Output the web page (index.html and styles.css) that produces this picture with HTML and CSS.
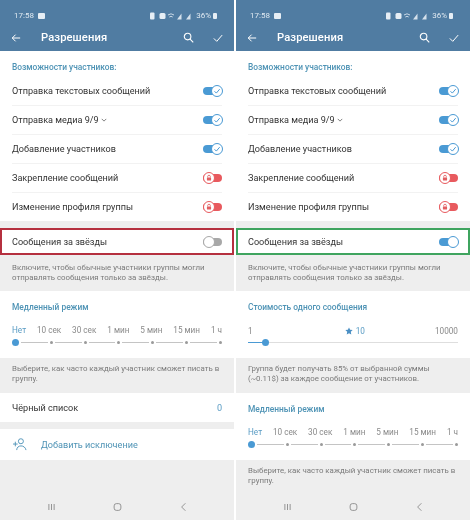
FILE: index.html
```html
<!DOCTYPE html>
<html lang="ru">
<head>
<meta charset="utf-8">
<title>Разрешения</title>
<link rel="stylesheet" href="styles.css">
</head>
<body>
<svg class="defs" width="0" height="0" aria-hidden="true">
  <symbol id="i-check" viewBox="0 0 12 12"><path d="M3 6.300l2.200 2.200L9.200 3.800" fill="none" stroke="#4a9ad4" stroke-width="1.200"/></symbol>
  <symbol id="i-lock" viewBox="0 0 12 12"><path d="M4.400 5.400V4.300a1.600 1.600 0 0 1 3.200 0v1.100" fill="none" stroke="#e25f62" stroke-width="1"/><rect x="3.500" y="5.300" width="5" height="3.700" rx=".7" fill="#e25f62"/></symbol>
  <symbol id="i-status" viewBox="0 0 46 8">
    <rect x="0" y="0.500" width="4.500" height="7" rx="1" fill="#e6eef5"/>
    <rect x="9.500" y="1" width="6" height="6" rx="1.500" fill="#e6eef5"/>
    <path d="M18 3q3-2.400 6 0M19.300 5q1.700-1.300 3.400 0" fill="none" stroke="#d5e1ec" stroke-width=".9"/>
    <path d="M27 7.500l4.500-6v6zM36 7.500l4.500-6v6z" fill="#d5e1ec"/>
  </symbol>
</svg>
<main class="screens">

  <section class="phone">
    <header class="top">
      <div class="status">
        <span class="clock">17:58</span>
        <span class="pic"></span>
        <span class="status-right"><svg class="status-icons"><use href="#i-status"/></svg><span class="percent">36%</span><span class="batt"></span></span>
      </div>
      <div class="bar">
        <svg class="icon back" viewBox="0 0 12 12"><path d="M11 6H1.500M5.500 2L1.500 6l4 4" fill="none" stroke="#fff" stroke-width="1.200"/></svg>
        <span class="title">Разрешения</span>
        <svg class="icon search" viewBox="0 0 12 12"><circle cx="5" cy="5" r="3.600" fill="none" stroke="#fff" stroke-width="1.200"/><path d="M7.700 7.700L11.200 11.200" stroke="#fff" stroke-width="1.200"/></svg>
        <svg class="icon done" viewBox="0 0 12 12"><path d="M1 6.500l3.500 3.500L11 2.500" fill="none" stroke="#fff" stroke-width="1.200"/></svg>
      </div>
    </header>
    <div class="card perms">
      <h2 class="heading">Возможности участников:</h2>
      <div class="row line"><span>Отправка текстовых сообщений</span><span class="toggle on"><svg class="knob"><use href="#i-check"/></svg></span></div>
      <div class="row line"><span>Отправка медиа 9/9<svg class="caret" viewBox="0 0 8 5"><path d="M1 1l3 3 3-3" fill="none" stroke="#444" stroke-width=".9"/></svg></span><span class="toggle on"><svg class="knob"><use href="#i-check"/></svg></span></div>
      <div class="row line"><span>Добавление участников</span><span class="toggle on"><svg class="knob"><use href="#i-check"/></svg></span></div>
      <div class="row line"><span>Закрепление сообщений</span><span class="toggle locked"><svg class="knob"><use href="#i-lock"/></svg></span></div>
      <div class="row last"><span>Изменение профиля группы</span><span class="toggle locked"><svg class="knob"><use href="#i-lock"/></svg></span></div>
    </div>
    <div class="stars red"><span>Сообщения за звёзды</span><span class="toggle off"><span class="knob"></span></span></div>
    <p class="hint hint-stars">Включите, чтобы обычные участники группы могли отправлять сообщения только за звёзды.</p>
    <div class="card slow">
      <h2 class="heading">Медленный режим</h2>
      <div class="labels"><span class="active">Нет</span><span>10 сек</span><span>30 сек</span><span>1 мин</span><span>5 мин</span><span>15 мин</span><span>1 ч</span></div>
      <div class="steps"><i class="thumb"></i><b></b><i></i><b></b><i></i><b></b><i></i><b></b><i></i><b></b><i></i><b></b><i></i></div>
    </div>
    <p class="hint">Выберите, как часто каждый участник сможет писать в группу.</p>
    <div class="card row block"><span>Чёрный список</span><span class="count">0</span></div>
    <div class="card row add">
      <svg class="add-icon" viewBox="0 0 16 14"><path d="M1 6.500h5M3.500 4v5" stroke="#4f93b8" fill="none" stroke-width="1"/><circle cx="9.500" cy="3.500" r="2.700" fill="none" stroke="#4f93b8"/><path d="M5 13c0-6 9-6 10 0" fill="none" stroke="#4f93b8"/></svg>
      <span class="link">Добавить исключение</span>
    </div>
    <nav class="nav">
      <svg class="nav-icon" viewBox="0 0 12 12"><path d="M2.500 2v8M6 2v8M9.500 2v8" stroke="#777" fill="none"/></svg>
      <svg class="nav-icon" viewBox="0 0 12 12"><rect x="1.500" y="1.500" width="9" height="9" rx="3" fill="none" stroke="#777"/></svg>
      <svg class="nav-icon" viewBox="0 0 12 12"><path d="M8.500 1L3.500 6l5 5" fill="none" stroke="#777"/></svg>
    </nav>
  </section>

  <section class="phone">
    <header class="top">
      <div class="status">
        <span class="clock">17:58</span>
        <span class="pic"></span>
        <span class="status-right"><svg class="status-icons"><use href="#i-status"/></svg><span class="percent">36%</span><span class="batt"></span></span>
      </div>
      <div class="bar">
        <svg class="icon back" viewBox="0 0 12 12"><path d="M11 6H1.500M5.500 2L1.500 6l4 4" fill="none" stroke="#fff" stroke-width="1.200"/></svg>
        <span class="title">Разрешения</span>
        <svg class="icon search" viewBox="0 0 12 12"><circle cx="5" cy="5" r="3.600" fill="none" stroke="#fff" stroke-width="1.200"/><path d="M7.700 7.700L11.200 11.200" stroke="#fff" stroke-width="1.200"/></svg>
        <svg class="icon done" viewBox="0 0 12 12"><path d="M1 6.500l3.500 3.500L11 2.500" fill="none" stroke="#fff" stroke-width="1.200"/></svg>
      </div>
    </header>
    <div class="card perms">
      <h2 class="heading">Возможности участников:</h2>
      <div class="row line"><span>Отправка текстовых сообщений</span><span class="toggle on"><svg class="knob"><use href="#i-check"/></svg></span></div>
      <div class="row line"><span>Отправка медиа 9/9<svg class="caret" viewBox="0 0 8 5"><path d="M1 1l3 3 3-3" fill="none" stroke="#444" stroke-width=".9"/></svg></span><span class="toggle on"><svg class="knob"><use href="#i-check"/></svg></span></div>
      <div class="row line"><span>Добавление участников</span><span class="toggle on"><svg class="knob"><use href="#i-check"/></svg></span></div>
      <div class="row line"><span>Закрепление сообщений</span><span class="toggle locked"><svg class="knob"><use href="#i-lock"/></svg></span></div>
      <div class="row last"><span>Изменение профиля группы</span><span class="toggle locked"><svg class="knob"><use href="#i-lock"/></svg></span></div>
    </div>
    <div class="stars green"><span>Сообщения за звёзды</span><span class="toggle on"><span class="knob"></span></span></div>
    <p class="hint hint-stars">Включите, чтобы обычные участники группы могли отправлять сообщения только за звёзды.</p>
    <div class="card price">
      <h2 class="heading">Стоимость одного сообщения</h2>
      <div class="price-labels"><span>1</span><span class="amount"><svg class="star" viewBox="0 0 12 12"><path d="M6 .6l1.700 3.500 3.800.5-2.800 2.700.7 3.800L6 9.300l-3.400 1.800.7-3.800L.5 4.600l3.800-.5z" fill="#4a8fc4"/></svg>10</span><span>10000</span></div>
      <div class="range"><i class="thumb"></i></div>
    </div>
    <p class="hint">Группа будет получать 85% от выбранной суммы (~0.11$) за каждое сообщение от участников.</p>
    <div class="card slow">
      <h2 class="heading">Медленный режим</h2>
      <div class="labels"><span class="active">Нет</span><span>10 сек</span><span>30 сек</span><span>1 мин</span><span>5 мин</span><span>15 мин</span><span>1 ч</span></div>
      <div class="steps"><i class="thumb"></i><b></b><i></i><b></b><i></i><b></b><i></i><b></b><i></i><b></b><i></i><b></b><i></i></div>
    </div>
    <p class="hint">Выберите, как часто каждый участник сможет писать в группу.</p>
    <nav class="nav">
      <svg class="nav-icon" viewBox="0 0 12 12"><path d="M2.500 2v8M6 2v8M9.500 2v8" stroke="#777" fill="none"/></svg>
      <svg class="nav-icon" viewBox="0 0 12 12"><rect x="1.500" y="1.500" width="9" height="9" rx="3" fill="none" stroke="#777"/></svg>
      <svg class="nav-icon" viewBox="0 0 12 12"><path d="M8.500 1L3.500 6l5 5" fill="none" stroke="#777"/></svg>
    </nav>
  </section>

</main>
</body>
</html>
```
FILE: styles.css
```css
* { box-sizing: border-box; }
html, body { margin: 0; padding: 0; background: #fff; }
body { width: 470px; height: 520px; overflow: hidden; font-family: Roboto, "Liberation Sans", sans-serif; color: #333; }
.defs { display: block; height: 0; }
.screens { display: flex; justify-content: space-between; height: 520px; }
.phone { width: 234px; height: 520px; background: #eeeeee; display: flex; flex-direction: column; overflow: hidden; filter: blur(.4px); }
.top { height: 51px; background: #507ca2; color: #fff; flex: none; }
.status { height: 24px; padding: 7px 14px 0; display: flex; align-items: center; font-size: 8px; color: #dfe9f1; }
.pic { width: 7px; height: 6px; margin-left: 4px; background: #e6eef5; border-radius: 1px; }
.status-right { margin-left: auto; margin-right: 3px; display: flex; align-items: center; }
.status-icons { width: 46px; height: 8px; }
.percent { margin-left: 0; }
.batt { width: 4px; height: 6px; margin-left: 2px; background: #e6eef5; border-radius: 1px; }
.bar { height: 27px; padding: 0 11px; display: flex; align-items: center; }
.icon { width: 10px; height: 10px; flex: none; }
.title { margin-left: 20px; font-size: 11.200px; font-weight: 500; letter-spacing: .1px; }
.search { margin-left: auto; width: 11px; height: 11px; }
.done { margin-left: 19px; }
.card { background: #fff; flex: none; }
.perms { height: 170px; padding: 0 12px; }
.heading { margin: 0; height: 26px; padding-top: 11px; font-size: 8.400px; line-height: 11px; font-weight: 500; color: #4e93b5; }
.row { height: 29px; display: flex; align-items: center; justify-content: space-between; font-size: 9.100px; }
.row.last { height: 28px; }
.line { border-bottom: 1px solid #f2f2f2; }
.caret { width: 6px; height: 4px; margin: 0 0 1px 2px; }
.toggle { position: relative; width: 19px; height: 8px; border-radius: 4px; flex: none; }
.toggle .knob { position: absolute; top: -2px; width: 12px; height: 12px; border-radius: 50%; background: #fff; border: 1px solid; }
.on { background: #4a9ad4; }
.on .knob { right: -1px; border-color: #4a9ad4; }
.locked { background: #e85a5e; }
.locked .knob { left: 0; border-color: #e85a5e; }
.off { background: #a8a8a8; }
.off .knob { left: 0; border-color: #a8a8a8; }
.stars { height: 27px; margin: 7px 0 0; padding: 0 10px; background: #fff; border: 2px solid; display: flex; align-items: center; justify-content: space-between; font-size: 9.100px; flex: none; }
.red { border-color: #b5303f; }
.green { border-color: #3fa45f; }
.hint { margin: 0; padding: 6px 12px 0; height: 35px; flex: none; font-size: 7.900px; line-height: 9.500px; color: #7a7a7a; }
.hint-stars { height: 36px; padding-top: 8px; }
.slow { height: 67px; padding: 0 12px; }
.labels { display: flex; justify-content: space-between; margin-top: 8px; font-size: 8.200px; line-height: 11px; color: #8a8a8a; }
.active { color: #5a9cc4; }
.steps { display: flex; align-items: center; margin-top: 2px; height: 8px; }
.steps i { width: 3px; height: 3px; border-radius: 50%; background: #9a9a9a; flex: none; }
.steps b { flex: 1; height: 1px; margin: 0 2px; background: #c4c4c4; }
.steps .thumb { width: 7px; height: 7px; background: #4a9ad4; }
.block { padding: 0 12px; }
.count { color: #5a9cc4; }
.add { height: 31px; margin-top: 7px; padding: 0 12px; justify-content: flex-start; }
.add-icon { width: 15px; height: 13px; flex: none; }
.link { margin-left: 14px; color: #4e93b5; font-size: 9.100px; }
.price { height: 67px; padding: 0 12px; }
.price-labels { display: flex; justify-content: space-between; align-items: center; margin-top: 8px; height: 11px; font-size: 8.200px; color: #8a8a8a; }
.amount { display: flex; align-items: center; gap: 3px; color: #5a9cc4; margin-left: 22px; }
.star { width: 8px; height: 8px; }
.range { position: relative; height: 1px; margin-top: 6px; background: #dedede; }
.range .thumb { position: absolute; left: 14px; top: -3px; width: 7px; height: 7px; border-radius: 50%; background: #4a9ad4; }
.range::before { content: ""; position: absolute; left: 0; top: 0; width: 16px; height: 1px; background: #4a9ad4; }
.nav { flex: 1; display: flex; justify-content: center; align-items: flex-end; gap: 57px; padding-bottom: 8px; }
.nav-icon { width: 9px; height: 10px; }
```
